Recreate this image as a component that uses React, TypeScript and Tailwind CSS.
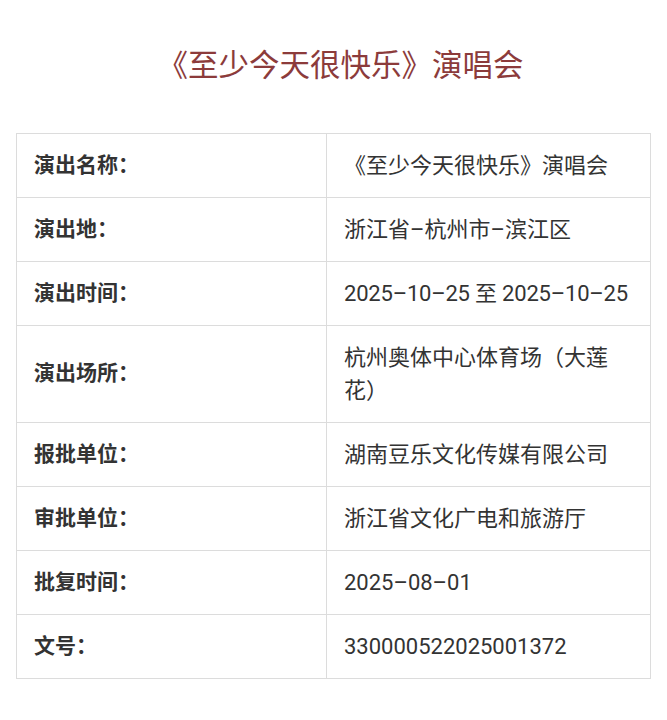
const rows: { label: string; value: string; nowrap?: boolean }[] = [
  { label: "演出名称", value: "《至少今天很快乐》演唱会" },
  { label: "演出地", value: "浙江省–杭州市–滨江区" },
  { label: "演出时间", value: "2025–10–25 至 2025–10–25", nowrap: true },
  { label: "演出场所", value: "杭州奥体中心体育场（大莲花）" },
  { label: "报批单位", value: "湖南豆乐文化传媒有限公司" },
  { label: "审批单位", value: "浙江省文化广电和旅游厅" },
  { label: "批复时间", value: "2025–08–01" },
  { label: "文号", value: "330000522025001372" },
];

export default function App() {
  return (
    <div
      className="min-h-[720px] w-[667px] bg-white pt-[46px]"
      style={{ fontFamily: 'Roboto, "Noto Sans CJK SC", sans-serif' }}
    >
      {/* Title */}
      <h1 className="pl-[14px] text-center text-[30.5px] font-normal leading-[40px] text-[#8c3b3b]">
        《至少今天很快乐》演唱会
      </h1>

      {/* Info table */}
      <div className="mx-[16px] mt-[47px] w-[635px] border border-[#dcdcdc]">
        {rows.map((row, i) => (
          <div
            key={row.label}
            className={`grid grid-cols-[310px_1fr] ${i > 0 ? "border-t border-[#dcdcdc]" : ""}`}
          >
            <div className="flex items-center border-r border-[#dcdcdc] pl-[17px] text-[21px] font-bold text-[#333]">
              {row.label}：
            </div>
            <div
              className={`py-[15px] pl-[17px] pr-[26px] text-[22px] leading-[33px] text-[#333] ${
                row.nowrap ? "whitespace-nowrap tracking-[-0.2px]" : ""
              }`}
            >
              {row.value}
            </div>
          </div>
        ))}
      </div>
    </div>
  );
}
